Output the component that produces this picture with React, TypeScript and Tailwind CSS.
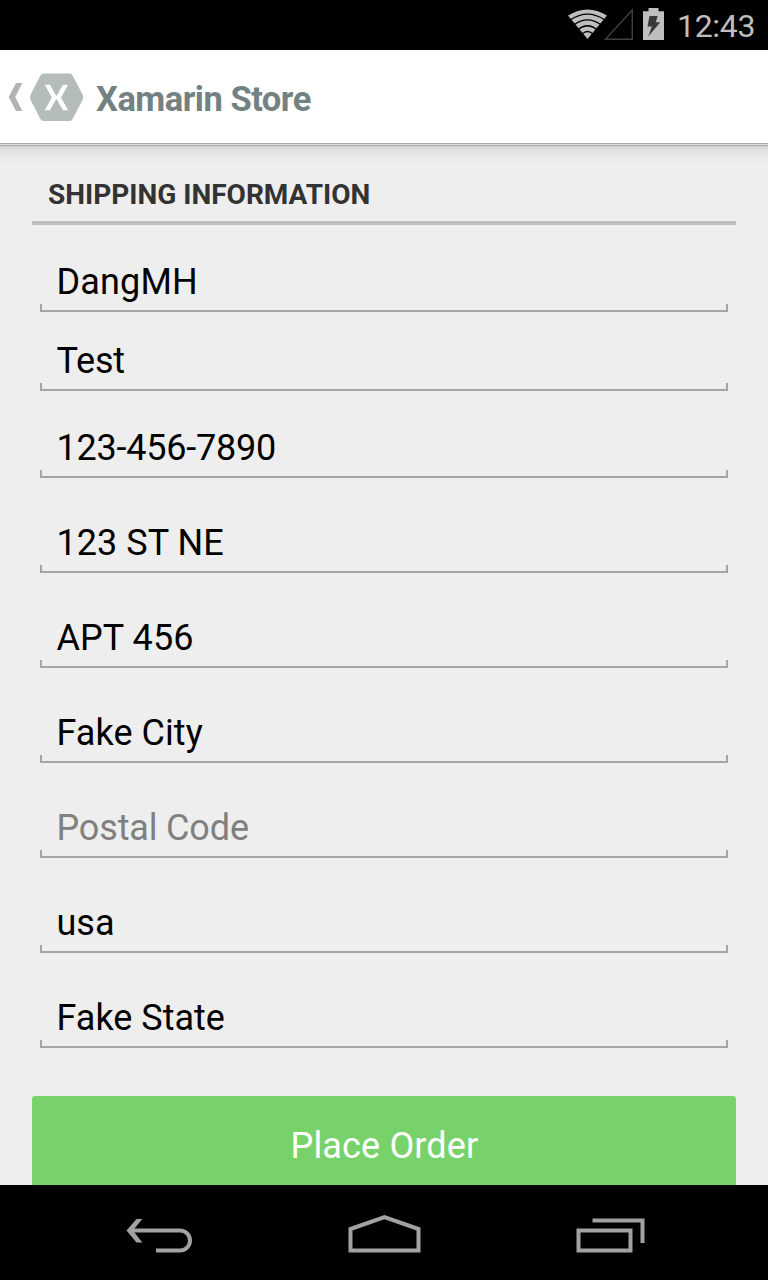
type FieldProps = { value?: string; placeholder?: string; size: string; tracking: string };

const fields: FieldProps[] = [
  { value: "DangMH", size: "h-[87px]", tracking: "tracking-[0.15px]" },
  { value: "Test", size: "h-[79px]", tracking: "tracking-[-0.2px]" },
  { value: "123-456-7890", size: "h-[87px]", tracking: "tracking-[-0.22px]" },
  { value: "123 ST NE", size: "h-[95px]", tracking: "tracking-[0.05px]" },
  { value: "APT 456", size: "h-[95px]", tracking: "tracking-[0.05px]" },
  { value: "Fake City", size: "h-[95px]", tracking: "tracking-[0.05px]" },
  { placeholder: "Postal Code", size: "h-[95px]", tracking: "tracking-[-0.15px]" },
  { value: "usa", size: "h-[95px]", tracking: "tracking-[0px]" },
  { value: "Fake State", size: "h-[95px]", tracking: "tracking-[0px]" },
];

function StatusBar() {
  return (
    <header className="flex h-[50px] shrink-0 justify-end bg-black pr-3">
      <svg width="108" height="50" viewBox="560 0 108 50" className="shrink-0">
        <path d="M587.5 39 L568 15.5 Q587.5 3.5 607 15.5 Z" fill="#bebebe" />
        <g fill="none" stroke="#000" strokeWidth="1.3">
          <path d="M570.5 19.8 Q587.5 8.5 604.5 19.8" />
          <path d="M574 24.8 Q587.5 15 601 24.8" />
          <path d="M578 29.5 Q587.5 22 597 29.5" />
          <path d="M582 34 Q587.5 29 593 34" />
        </g>
        <path d="M605.5 39.3 L632.3 10 V39.3 Z" fill="none" stroke="#404040" strokeWidth="1.4" />
        <path d="M643 11.3 H648.5 V8 H658.5 V11.3 H664 V40 H643 Z" fill="#bebebe" />
        <path d="M649.5 16 H657.7 L655.7 22.3 H660.3 L648.3 36.5 L651.8 26.6 H647.5 Z" fill="#383838" />
      </svg>
      <time className="mt-[7px] ml-[9px] w-[79px] whitespace-nowrap text-[32px] leading-[38px] tracking-[-0.3px] text-[#bebebe]">12:43</time>
    </header>
  );
}

function ActionBar() {
  return (
    <div className="flex h-[93px] shrink-0 items-center bg-white">
      <svg width="96" height="93" viewBox="0 50 96 93" className="shrink-0">
        <path d="M16 83 H22.3 L15.3 97 L22.3 111 H16 L8.7 97 Z" fill="#b2b2b2" />
        <path d="M43.5 73.5 H69.5 Q71.5 73.5 72.6 75.4 L82.7 94.7 Q84 97.3 82.7 99.7 L72.6 119 Q71.5 121 69.5 121 H43.5 Q41.5 121 40.4 119 L30.5 99.7 Q29.2 97.3 30.5 94.7 L40.4 75.4 Q41.5 73.5 43.5 73.5 Z" fill="#b4bcbc" />
        <path d="M44.7 84.7 H49.9 L56.4 96.2 L62.9 84.7 H68.1 L61 97.5 L68.1 110.3 H62.9 L56.4 98.8 L49.9 110.3 H44.7 L51.8 97.5 Z" fill="#fff" />
      </svg>
      <h1 className="mt-1 whitespace-nowrap text-[34.5px] leading-[42px] font-bold tracking-[-0.5px] text-[#738182]">Xamarin Store</h1>
    </div>
  );
}

function Field({ value, placeholder, size, tracking }: FieldProps) {
  return (
    <label className={`flex flex-col justify-end ${size}`}>
      <input
        defaultValue={value}
        placeholder={placeholder}
        className={`block h-[42px] w-full bg-transparent pr-4 pl-[16.5px] text-[36px] leading-[42px] text-black outline-none placeholder:text-[#808080] placeholder:opacity-100 ${tracking}`}
      />
      <span className="mt-px block h-2 w-full border-x-2 border-b-2 border-[#a5a5a5]" />
    </label>
  );
}

function NavigationBar() {
  return (
    <nav className="flex h-[95px] shrink-0 bg-black">
      <svg width="768" height="95" viewBox="0 1185 768 95" fill="none" stroke="#a2a2a2" strokeWidth="4">
        <path d="M130 1230.5 H180 A10 10 0 0 1 180 1250.5 H156" />
        <path d="M136.5 1219 H142.3 L134.5 1228.5 V1232.5 L142.3 1242.5 H136.5 L126.5 1230.5 Z" fill="#a2a2a2" stroke="none" />
        <path d="M350.5 1250.5 V1229 L384.5 1217 L418.5 1229 V1250.5 Z" />
        <path d="M578.5 1230.5 H630.5 V1250.5 H578.5 Z" />
        <path d="M592.5 1220.5 H642.5 V1243" />
      </svg>
    </nav>
  );
}

export default function App() {
  return (
    <div className="flex h-[1280px] w-[768px] flex-col overflow-hidden bg-[#eeeeee] font-['Roboto',sans-serif]">
      <StatusBar />
      <ActionBar />
      <div className="h-px shrink-0 bg-[#a7a7a7]" />
      <div className="h-px shrink-0 bg-[#dedede]" />
      <div className="h-px shrink-0 bg-[#a9a9a9]" />
      <main className="flex min-h-0 flex-1 flex-col bg-[linear-gradient(#cecece_0px,#dedede_3px,#e8e8e8_9px,#eeeeee_18px)] px-8">
        <h2 className="flex h-[79px] shrink-0 flex-col justify-end border-b-4 border-[#bebebe] px-4 text-[28px] leading-[33px] font-bold text-[#333333]">
          <span className="mb-[10px] whitespace-nowrap">SHIPPING INFORMATION</span>
        </h2>
        <form className="flex flex-col" onSubmit={(event) => event.preventDefault()}>
          <div className="flex flex-col px-2">
            {fields.map((field, index) => <Field key={index} {...field} />)}
          </div>
          <button className="mt-12 h-[97px] shrink-0 rounded-[3px] bg-[#77d269] pt-0.5 pl-px text-[36px] leading-[42px] tracking-[0.15px] text-white">Place Order</button>
        </form>
      </main>
      <NavigationBar />
    </div>
  );
}
